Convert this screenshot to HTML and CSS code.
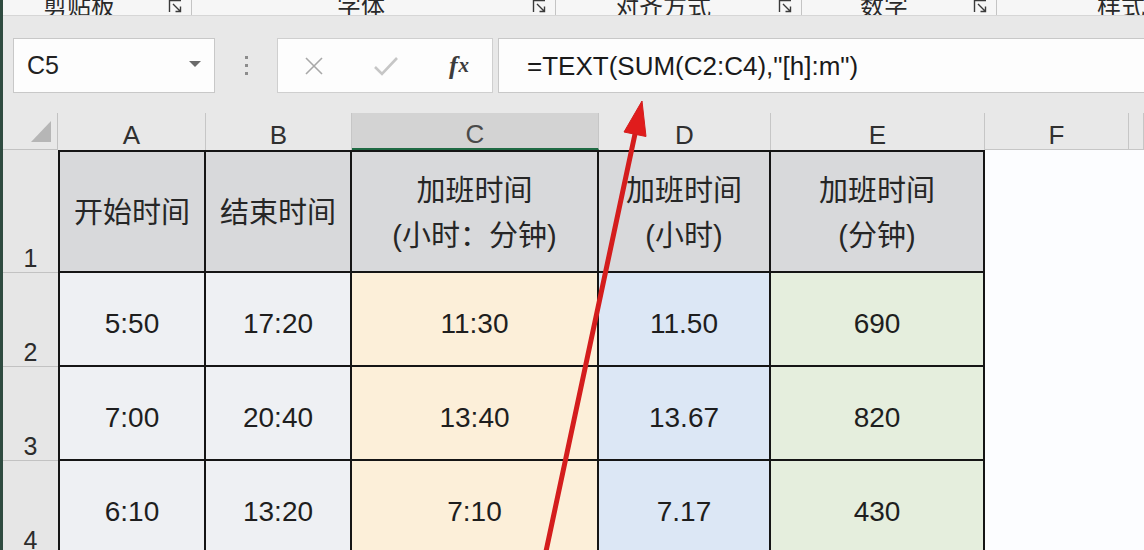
FILE: index.html
```html
<!DOCTYPE html>
<html lang="zh-CN">
<head>
<meta charset="utf-8">
<title>加班时间</title>
<link rel="stylesheet" href="styles.css">
</head>
<body>
<div class="window">
  
  <div class="ribbon">
    <span class="group-label m1">剪贴板</span>
    <svg class="launcher l1" viewBox="0 0 14 14"><path d="M1.5 13V1.5H13M5 5l7 7M7.5 12.5H12.5V7.5"/></svg>
    <span class="sep"></span>
    <span class="group-label m2">字体</span>
    <svg class="launcher l2" viewBox="0 0 14 14"><path d="M1.5 13V1.5H13M5 5l7 7M7.5 12.5H12.5V7.5"/></svg>
    <span class="sep"></span>
    <span class="group-label m3">对齐方式</span>
    <svg class="launcher l3" viewBox="0 0 14 14"><path d="M1.5 13V1.5H13M5 5l7 7M7.5 12.5H12.5V7.5"/></svg>
    <span class="sep"></span>
    <span class="group-label m4">数字</span>
    <svg class="launcher l4" viewBox="0 0 14 14"><path d="M1.5 13V1.5H13M5 5l7 7M7.5 12.5H12.5V7.5"/></svg>
    <span class="sep"></span>
    <span class="group-label m5">样式</span>
  </div>

  <!-- name box + formula bar -->
  <div class="formula-bar">
    <div class="name-box"><span>C5</span><span class="caret"></span></div>
    <div class="grip"><i></i><i></i><i></i></div>
    <div class="fx-buttons">
      <span class="fx-btn"><svg width="20" height="20" viewBox="0 0 20 20"><path class="x-mark" d="M2 2L18 18M18 2L2 18"/></svg></span>
      <span class="fx-btn"><svg width="26" height="22" viewBox="0 0 26 22"><path class="v-mark" d="M2 12L9 19L24 3"/></svg></span>
      <span class="fx-btn fx-label">f<span class="fx-x">x</span></span>
    </div>
    <div class="formula-input">=TEXT(SUM(C2:C4),"[h]:m")</div>
  </div>

  <!-- worksheet -->
  <div class="sheet">
    <div class="corner"><span class="corner-tri"></span></div>
    <div class="col-hd">A</div>
    <div class="col-hd">B</div>
    <div class="col-hd col-sel">C</div>
    <div class="col-hd">D</div>
    <div class="col-hd">E</div>
    <div class="col-hd col-open">F</div>
    <div class="col-hd col-open"></div>

    <div class="row-hd">1</div>
    <div class="cell hd first top">开始时间</div>
    <div class="cell hd top">结束时间</div>
    <div class="cell hd top">加班时间<br>(小时：分钟)</div>
    <div class="cell hd top">加班时间<br>(小时)</div>
    <div class="cell hd top">加班时间<br>(分钟)</div>
    <div class="blank"></div>
    <div class="blank"></div>

    <div class="row-hd">2</div>
    <div class="cell in first">5:50</div>
    <div class="cell in">17:20</div>
    <div class="cell hm">11:30</div>
    <div class="cell hr">11.50</div>
    <div class="cell mn">690</div>
    <div class="blank"></div>
    <div class="blank"></div>

    <div class="row-hd">3</div>
    <div class="cell in first">7:00</div>
    <div class="cell in">20:40</div>
    <div class="cell hm">13:40</div>
    <div class="cell hr">13.67</div>
    <div class="cell mn">820</div>
    <div class="blank"></div>
    <div class="blank"></div>

    <div class="row-hd">4</div>
    <div class="cell in first">6:10</div>
    <div class="cell in">13:20</div>
    <div class="cell hm">7:10</div>
    <div class="cell hr">7.17</div>
    <div class="cell mn">430</div>
    <div class="blank"></div>
    <div class="blank"></div>
  </div>

  <!-- callout arrow pointing at the formula -->
  <svg class="callout" width="1144" height="550" viewBox="0 0 1144 550">
    <line x1="545" y1="556" x2="635" y2="134" class="callout-shaft"/>
    <polygon points="642,101 624,132 646,136.5" class="callout-head"/>
  </svg>
</div>
</body>
</html>
```

FILE: styles.css
```css
* {
  box-sizing: border-box;
}

html, body {
  margin: 0;
  padding: 0;
  background: #e8e8e8;
}

body {
  font-family: "Liberation Sans", "Noto Sans CJK SC", sans-serif;
  color: #1e1e1e;
}

.window {
  position: relative;
  width: 1144px;
  height: 550px;
  overflow: hidden;
  border-left: 3px solid #2f4b40;
  background: #e8e8e8;
}

/* ---------- ribbon captions ---------- */
.ribbon {
  height: 16px;
  display: flex;
  align-items: flex-end;
  overflow: hidden;
  background: #f6f6f6;
  border-bottom: 1px solid #d6d6d6;
}

.group-label {
  flex: none;
  font-family: "Noto Sans CJK SC", sans-serif;
  font-size: 24px;
  line-height: 24px;
  color: #2a2a2a;
  margin-bottom: -2px;
}

.m1 { margin-left: 40px; }
.m2 { margin-left: 145px; }
.m3 { margin-left: 59px; }
.m4 { margin-left: 58px; }
.m5 { margin-left: 100px; }

.launcher {
  flex: none;
  width: 14px;
  height: 14px;
  margin-bottom: 2px;
  fill: none;
  stroke: #3a3a3a;
  stroke-width: 1.4;
}

.l1 { margin-left: 53px; }
.l2 { margin-left: 147px; }
.l3 { margin-left: 67px; }
.l4 { margin-left: 65px; }

.sep {
  flex: none;
  width: 1px;
  height: 16px;
  margin-left: 9px;
  background: #c4c4c4;
}

/* ---------- formula bar ---------- */
.formula-bar {
  display: flex;
  height: 55px;
  margin-top: 22px;
  padding-left: 10px;
}

.name-box {
  flex: none;
  width: 202px;
  display: flex;
  align-items: center;
  justify-content: space-between;
  padding: 0 13px 0 13px;
  background: #fdfdfd;
  border: 1px solid #c8c8c8;
  font-size: 25px;
  color: #222;
}

.caret {
  width: 0;
  height: 0;
  border-left: 6px solid transparent;
  border-right: 6px solid transparent;
  border-top: 6px solid #6a6a6a;
  margin-top: -3px;
}

.grip {
  flex: none;
  width: 62px;
  display: flex;
  flex-direction: column;
  align-items: center;
  justify-content: center;
  gap: 5px;
}

.grip i {
  display: block;
  width: 3px;
  height: 3px;
  background: #8c8c8c;
}

.fx-buttons {
  flex: none;
  width: 216px;
  display: flex;
  background: #fdfdfd;
  border: 1px solid #cfcfcf;
}

.fx-btn {
  flex: none;
  width: 72px;
  display: flex;
  align-items: center;
  justify-content: center;
}

.x-mark {
  fill: none;
  stroke: #a8a8a8;
  stroke-width: 1.6;
}

.v-mark {
  fill: none;
  stroke: #c6c6c6;
  stroke-width: 2.6;
}

.fx-label {
  font-family: "Liberation Serif", serif;
  font-style: italic;
  font-weight: bold;
  font-size: 26px;
  color: #3c3c3c;
  padding-left: 2px;
}

.fx-x {
  font-size: 21px;
  margin-left: 1px;
}

.formula-input {
  flex: 1;
  margin-left: 5px;
  margin-right: -4px;
  display: flex;
  align-items: center;
  padding: 2px 0 0 28px;
  background: #fdfdfd;
  border: 1px solid #c8c8c8;
  font-size: 26px;
  color: #1a1a1a;
  white-space: pre;
}

/* ---------- worksheet grid ---------- */
.sheet {
  margin-top: 20px;
  display: grid;
  grid-template-columns: 55px 148px 146px 247px 172px 214px 144px 1fr;
  grid-template-rows: 37px 123px 94px 94px 94px;
}

.corner {
  display: flex;
  justify-content: flex-end;
  align-items: flex-end;
  padding: 0 6px 7px 0;
  background: #e8e8e8;
  border-right: 1px solid #c2c2c2;
  border-bottom: 1px solid #c2c2c2;
}

.corner-tri {
  width: 0;
  height: 0;
  border-left: 20px solid transparent;
  border-bottom: 21px solid #b6b6b6;
}

.col-hd {
  display: flex;
  align-items: center;
  justify-content: center;
  padding-top: 8px;
  background: #e8e8e8;
  border-right: 1px solid #c6c6c6;
  font-size: 26px;
  color: #303030;
}

.col-sel {
  background: #d3d3d3;
  color: #4a4a4a;
  border-bottom: 2px solid #1f6a43;
}

.col-open {
  border-bottom: 1px solid #c6c6c6;
}

.row-hd {
  display: flex;
  align-items: flex-end;
  justify-content: center;
  padding-bottom: 0;
  background: #e6e6e6;
  border-bottom: 1px solid #c2c2c2;
  font-size: 25px;
  line-height: 28px;
  color: #2c2c2c;
}

.cell {
  display: flex;
  align-items: center;
  justify-content: center;
  text-align: center;
  padding-top: 10px;
  border-right: 2px solid #151515;
  border-bottom: 2px solid #151515;
  font-size: 28px;
  color: #1e1e1e;
}

.first { border-left: 2px solid #151515; }
.top { border-top: 2px solid #151515; }

.hd {
  background: #d8d9db;
  font-size: 29px;
  line-height: 45px;
  padding-top: 4px;
  color: #262626;
}

.in { background: #eef0f3; }
.hm { background: #fcefd9; }
.hr { background: #dce7f5; }
.mn { background: #e5eedd; }

.blank {
  background: #fcfdff;
}

/* ---------- callout arrow ---------- */
.callout {
  position: absolute;
  left: -3px;
  top: 0;
  pointer-events: none;
}

.callout-shaft {
  stroke: #d41d1d;
  stroke-width: 5;
  stroke-linecap: round;
}

.callout-head {
  fill: #e01c1c;
  stroke: #d41d1d;
  stroke-width: 1;
  stroke-linejoin: round;
}
```
